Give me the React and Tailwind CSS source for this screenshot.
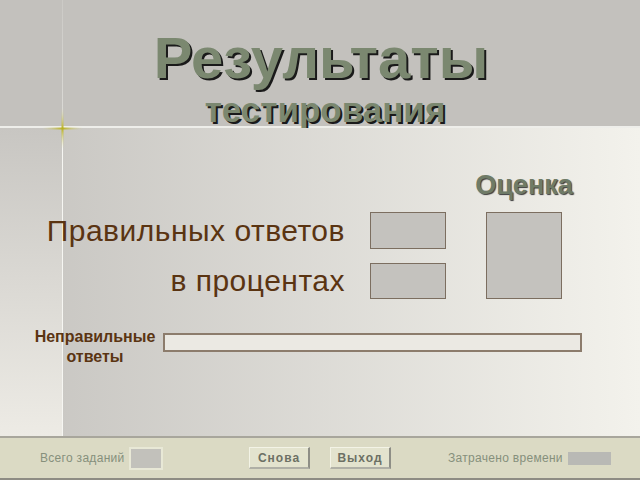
import React from 'react';

const Star = () => (
  <svg className="absolute left-[42px] top-[108px]" width="41" height="41" viewBox="0 0 41 41">
    <defs>
      <linearGradient id="h" x1="0" x2="1" y1="0" y2="0">
        <stop offset="0" stopColor="#d8d8a0" stopOpacity="0" />
        <stop offset="0.5" stopColor="#b8b020" />
        <stop offset="1" stopColor="#d8d8a0" stopOpacity="0" />
      </linearGradient>
      <linearGradient id="v" x1="0" x2="0" y1="0" y2="1">
        <stop offset="0" stopColor="#d8d8a0" stopOpacity="0" />
        <stop offset="0.5" stopColor="#b8b020" />
        <stop offset="1" stopColor="#d8d8a0" stopOpacity="0" />
      </linearGradient>
    </defs>
    <rect x="0" y="19.5" width="41" height="2" fill="url(#h)" />
    <rect x="19.5" y="0" width="2" height="41" fill="url(#v)" />
  </svg>
);

const FooterButton = ({ children }) => (
  <button className="w-[61px] h-[22px] bg-[#e3e3ce] border-t border-l border-t-[#f3f3e6] border-l-[#f3f3e6] border-r-2 border-b-2 border-r-[#8e8e86] border-b-[#b0b0a6] text-[12px] font-bold tracking-[1px] text-[#6c7064]">
    {children}
  </button>
);

export default function App() {
  return (
    <div className="w-[640px] h-[480px] overflow-hidden flex flex-col relative font-['Liberation_Sans',Arial,sans-serif]">
      <header className="h-[128px] shrink-0 [background:linear-gradient(to_bottom,#f0f0ec30,#f0f0ec90)_62px_0/1px_100%_no-repeat,#c3c1bd] border-b-2 border-[#eeeeea] flex flex-col items-center pt-[29px]">
        <h1 className="ml-[2px] text-[58px] leading-none font-bold text-[#7b8870] [text-shadow:2px_2px_0_#1a1a1a]">Результаты</h1>
        <h2 className="mt-[5px] ml-[10px] text-[35px] leading-none font-bold text-[#7b8870] [text-shadow:2px_2px_0_#1a1a1a]">тестирования</h2>
      </header>

      <main className="flex-1 flex flex-col [background:linear-gradient(#f6f6f2,#f6f6f2)_62px_0/1px_100%_no-repeat,linear-gradient(to_bottom,#c8c6c2,#edebe5)_0_0/62px_100%_no-repeat,linear-gradient(to_right,#c6c4c0,#f3f2ec)]">
        <div className="flex pt-[44px]">
          <div className="w-[473px]" />
          <div className="w-[102px] text-center text-[27px] leading-none font-bold text-[#6f7b67] [text-shadow:1px_1px_1px_#3a3a3a]">Оценка</div>
        </div>

        <div className="flex items-start mt-[13px]">
          <div className="w-[345px] flex flex-col items-end gap-[20px] pt-[4px] text-[30px] tracking-[0.5px] leading-none text-[#5a3412] whitespace-nowrap">
            <span>Правильных ответов</span>
            <span>в процентах</span>
          </div>
          <div className="ml-[25px] flex flex-col gap-[14px]">
            <div className="w-[76px] h-[37px] bg-[#c4c2be] border border-[#7c6e60]" />
            <div className="w-[76px] h-[36px] bg-[#c4c2be] border border-[#7c6e60]" />
          </div>
          <div className="ml-[40px] w-[76px] h-[87px] bg-[#c4c2be] border border-[#7c6e60]" />
        </div>

        <div className="flex items-start mt-[28px]">
          <div className="w-[158px] pl-[32px] text-center text-[16px] leading-[20px] font-bold text-[#5a3412] whitespace-nowrap">
            Неправильные<br />ответы
          </div>
          <div className="ml-[5px] mt-[6px] w-[419px] h-[19px] border-2 border-[#8c7c6c] bg-[#ebe9e3]" />
        </div>
      </main>

      <footer className="h-[44px] shrink-0 bg-[#dbdac4] border-t-2 border-[#a8a69c] border-b-2 border-b-[#8e8c84] flex items-center text-[12px] tracking-[0.3px] text-[#86907c]">
        <span className="ml-[40px] w-[89px] whitespace-nowrap">Всего заданий</span>
        <div className="w-[34px] h-[23px] bg-[#c2c1bb] border-2 border-[#e8e8d6]" />
        <div className="ml-[86px]"><FooterButton>Снова</FooterButton></div>
        <div className="ml-[20px]"><FooterButton>Выход</FooterButton></div>
        <span className="ml-[57px] w-[120px] whitespace-nowrap">Затрачено времени</span>
        <div className="w-[43px] h-[13px] bg-[#b9b9b5]" />
      </footer>

      <Star />
    </div>
  );
}
